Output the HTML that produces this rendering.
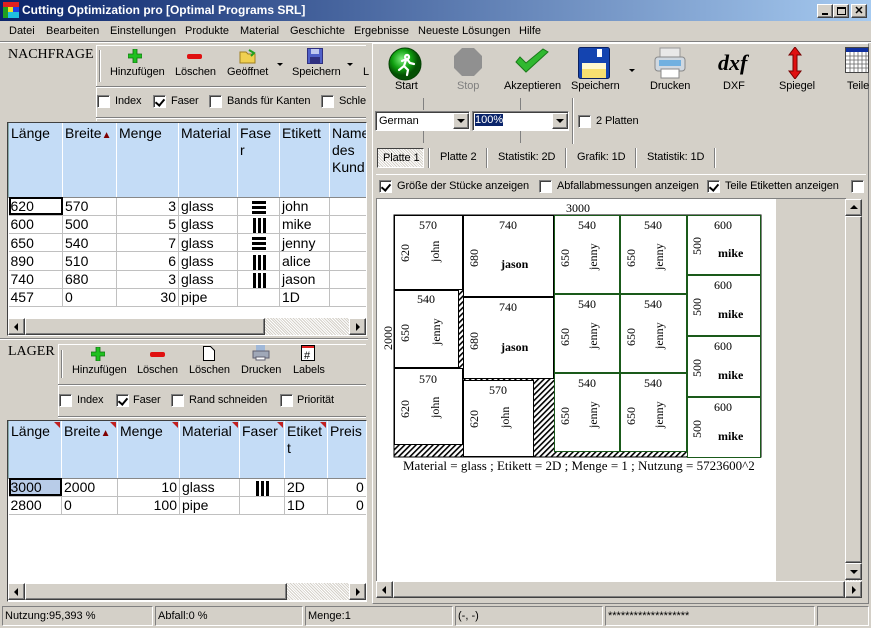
<!DOCTYPE html>
<html><head><meta charset="utf-8"><style>
*{box-sizing:border-box;margin:0;padding:0}
body{width:871px;height:628px;overflow:hidden;background:#d4d0c8;font-family:"Liberation Sans",Arial,sans-serif;font-size:12px;color:#000;position:relative}
.a{position:absolute}
.t{white-space:nowrap}
.cb{position:absolute;width:13px;height:13px;background:#fff;border:1px solid;border-color:#808080 #fff #fff #808080;box-shadow:inset 1px 1px 0 #404040}
.cb.k::after{content:"";position:absolute;left:3px;top:1px;width:4px;height:7px;border:solid #000;border-width:0 2px 2px 0;transform:rotate(40deg)}
table{border-collapse:collapse;table-layout:fixed;font-size:14px}
td{border-right:1px solid #c0c0c0;border-bottom:1px solid #c0c0c0;height:18px;padding:0 2px;white-space:nowrap;overflow:hidden;line-height:16px}
th{background:#c4dcf6;border-right:1px solid #fff;border-left:1px solid #8aa;border-bottom:1px solid #888;font-weight:normal;text-align:left;vertical-align:top;padding:2px 2px;line-height:17px;position:relative}
.r{text-align:right}
.tri::after{content:"";position:absolute;right:1px;top:1px;border-top:6px solid #c02020;border-left:6px solid transparent}
.sb{position:absolute;height:17px;background:#eee;background-image:repeating-linear-gradient(45deg,#fff 0 1px,#d4d0c8 1px 2px)}
.btn{position:absolute;background:#d4d0c8;border:1px solid;border-color:#fff #404040 #404040 #fff;box-shadow:inset -1px -1px 0 #808080}
.lbl{position:absolute;font-size:11px;white-space:nowrap;text-align:center;letter-spacing:-0.1px}
.sep{position:absolute;width:2px;border-left:1px solid #808080;border-right:1px solid #fff}
.st{position:absolute;top:606px;height:20px;border:1px solid;border-color:#808080 #fff #fff #808080;font-size:11px;padding:3px 2px;white-space:nowrap}
.bars{display:inline-block;width:16px;height:16px;vertical-align:middle}
.m{position:absolute;top:25px;font-size:11px;white-space:nowrap}
</style></head><body>
<div class="a" style="left:0;top:0;width:871px;height:21px;background:linear-gradient(90deg,#0a246a,#a6caf0)"></div>
<svg class="a" style="left:3px;top:2px" width="16" height="16"><rect x="0" y="0" width="16" height="5" fill="#e02020"/><rect x="0" y="5" width="5" height="11" fill="#20a020"/><rect x="5" y="5" width="5" height="5" fill="#f0e020"/><rect x="10" y="5" width="6" height="5" fill="#2040e0"/><rect x="5" y="10" width="11" height="6" fill="#20c0e0"/></svg>
<div class="a t" style="left:22px;top:3px;color:#fff;font-weight:bold;font-size:12px">Cutting Optimization pro [Optimal Programs SRL]</div>
<div class="btn" style="left:817px;top:4px;width:16px;height:14px"><div class="a" style="left:4px;top:8px;width:6px;height:2px;background:#000"></div></div>
<div class="btn" style="left:833px;top:4px;width:16px;height:14px"><div class="a" style="left:3px;top:2px;width:9px;height:8px;border:1px solid #000;border-top-width:2px"></div></div>
<div class="btn" style="left:851px;top:4px;width:16px;height:14px;font-size:11px;font-weight:bold;text-align:center;line-height:12px">✕</div>
<div class="m" style="left:9px">Datei</div><div class="m" style="left:46px">Bearbeiten</div><div class="m" style="left:110px">Einstellungen</div><div class="m" style="left:185px">Produkte</div><div class="m" style="left:240px">Material</div><div class="m" style="left:290px">Geschichte</div><div class="m" style="left:354px">Ergebnisse</div><div class="m" style="left:418px">Neueste Lösungen</div><div class="m" style="left:519px">Hilfe</div>
<div class="a" style="left:0;top:41px;width:871px;height:2px;border-top:1px solid #808080;border-bottom:1px solid #fff"></div>

<div class="a t" style="left:8px;top:47px;font-family:'Liberation Serif',serif;font-size:14px">NACHFRAGE</div>
<div class="a" style="left:96px;top:45px;width:270px;height:76px;background:#d4d0c8;border-left:1px solid #fff;border-top:1px solid #fff"></div>
<div class="sep" style="left:99px;top:50px;height:32px"></div>
<div class="a" style="left:96px;top:86px;width:270px;height:2px;border-top:1px solid #808080;border-bottom:1px solid #fff"></div>
<div class="a" style="left:96px;top:117px;width:270px;height:2px;border-top:1px solid #808080;border-bottom:1px solid #fff"></div>
<svg class="a" style="left:128px;top:49px" width="14" height="14"><path d="M5 0h4v5h5v4h-5v5h-4v-5h-5v-4h5z" fill="#20c020" stroke="#107010" stroke-width=".8"/></svg>
<div class="a" style="left:187px;top:54px;width:15px;height:5px;background:#e01010;border-radius:2px"></div>
<svg class="a" style="left:239px;top:48px" width="18" height="16"><path d="M1 4h6l2 2h7v9h-15z" fill="#f0d050" stroke="#a08020"/><path d="M10 2l5 3-3 3" fill="none" stroke="#20a020" stroke-width="2"/></svg>
<svg class="a" style="left:307px;top:48px" width="16" height="16"><rect x=".5" y=".5" width="15" height="15" fill="#5060c8" stroke="#303080"/><rect x="4" y="1" width="8" height="5" fill="#c0c8f0"/><rect x="3" y="9" width="10" height="6" fill="#303080"/></svg>
<div class="lbl" style="left:110px;top:66px">Hinzufügen</div>
<div class="lbl" style="left:175px;top:66px">Löschen</div>
<div class="lbl" style="left:227px;top:66px">Geöffnet</div>
<div class="a" style="left:277px;top:63px;border-top:3px solid #000;border-left:3px solid transparent;border-right:3px solid transparent"></div>
<div class="lbl" style="left:292px;top:66px">Speichern</div>
<div class="a" style="left:347px;top:63px;border-top:3px solid #000;border-left:3px solid transparent;border-right:3px solid transparent"></div>
<div class="lbl" style="left:363px;top:66px">L</div>
<div class="cb" style="left:97px;top:95px"></div><div class="lbl" style="left:115px;top:95px">Index</div>
<div class="cb k" style="left:153px;top:95px"></div><div class="lbl" style="left:171px;top:95px">Faser</div>
<div class="cb" style="left:209px;top:95px"></div><div class="lbl" style="left:227px;top:95px">Bands für Kanten</div>
<div class="cb" style="left:321px;top:95px"></div><div class="lbl" style="left:339px;top:95px">Schle</div>
<div class="a" style="left:7px;top:122px;width:360px;height:214px;background:#fff;border:1px solid;border-color:#404040 #fff #fff #404040;overflow:hidden">
<table style="width:400px">
<colgroup><col style="width:54px"><col style="width:54px"><col style="width:62px"><col style="width:59px"><col style="width:42px"><col style="width:50px"><col style="width:79px"></colgroup>
<tr style="height:74px"><th>Länge</th><th>Breite<span style="color:#800000;font-size:10px">▲</span></th><th>Menge</th><th>Material</th><th>Fase<br>r</th><th>Etikett</th><th>Name<br>des<br>Kund</th></tr>
<tr><td style="outline:2px solid #000;outline-offset:-2px">620</td><td>570</td><td class="r">3</td><td>glass</td><td style="text-align:center"><svg class="bars"><rect x="1" y="2" width="14" height="3"/><rect x="1" y="7" width="14" height="3"/><rect x="1" y="12" width="14" height="3"/></svg></td><td>john</td><td></td></tr>
<tr><td>600</td><td>500</td><td class="r">5</td><td>glass</td><td style="text-align:center"><svg class="bars"><rect x="2" y="1" width="3" height="15"/><rect x="7" y="1" width="3" height="15"/><rect x="12" y="1" width="3" height="15"/></svg></td><td>mike</td><td></td></tr>
<tr><td>650</td><td>540</td><td class="r">7</td><td>glass</td><td style="text-align:center"><svg class="bars"><rect x="1" y="2" width="14" height="3"/><rect x="1" y="7" width="14" height="3"/><rect x="1" y="12" width="14" height="3"/></svg></td><td>jenny</td><td></td></tr>
<tr><td>890</td><td>510</td><td class="r">6</td><td>glass</td><td style="text-align:center"><svg class="bars"><rect x="2" y="1" width="3" height="15"/><rect x="7" y="1" width="3" height="15"/><rect x="12" y="1" width="3" height="15"/></svg></td><td>alice</td><td></td></tr>
<tr><td>740</td><td>680</td><td class="r">3</td><td>glass</td><td style="text-align:center"><svg class="bars"><rect x="2" y="1" width="3" height="15"/><rect x="7" y="1" width="3" height="15"/><rect x="12" y="1" width="3" height="15"/></svg></td><td>jason</td><td></td></tr>
<tr><td>457</td><td>0</td><td class="r">30</td><td>pipe</td><td></td><td>1D</td><td></td></tr>
</table>
</div>
<div class="sb" style="left:8px;top:318px;width:358px"></div>
<div class="btn" style="left:8px;top:318px;width:17px;height:17px"><div class="a" style="left:5px;top:4px;border-right:4px solid #000;border-top:4px solid transparent;border-bottom:4px solid transparent"></div></div>
<div class="btn" style="left:25px;top:318px;width:240px;height:17px"></div>
<div class="btn" style="left:349px;top:318px;width:17px;height:17px"><div class="a" style="left:6px;top:4px;border-left:4px solid #000;border-top:4px solid transparent;border-bottom:4px solid transparent"></div></div>

<div class="a" style="left:0;top:338px;width:368px;height:2px;border-top:1px solid #808080;border-bottom:1px solid #fff"></div>
<div class="a t" style="left:8px;top:344px;font-family:'Liberation Serif',serif;font-size:14px">LAGER</div>
<div class="a" style="left:58px;top:344px;width:308px;height:74px;border-left:1px solid #fff;border-top:1px solid #fff"></div>
<div class="sep" style="left:61px;top:350px;height:28px"></div>
<div class="a" style="left:58px;top:384px;width:308px;height:2px;border-top:1px solid #808080;border-bottom:1px solid #fff"></div>
<div class="a" style="left:58px;top:416px;width:308px;height:2px;border-top:1px solid #808080;border-bottom:1px solid #fff"></div>
<svg class="a" style="left:91px;top:347px" width="14" height="14"><path d="M5 0h4v5h5v4h-5v5h-4v-5h-5v-4h5z" fill="#20c020" stroke="#107010" stroke-width=".8"/></svg>
<div class="a" style="left:150px;top:352px;width:15px;height:5px;background:#e01010;border-radius:2px"></div>
<svg class="a" style="left:203px;top:346px" width="12" height="15"><path d="M.5 .5h7l4 4v10h-11z" fill="#fff" stroke="#000"/></svg>
<svg class="a" style="left:252px;top:345px" width="18" height="16"><rect x="4" y="0" width="9" height="6" fill="#a0b8d8"/><rect x="1" y="6" width="16" height="7" fill="#a0a8b8" stroke="#606070"/><rect x="4" y="12" width="9" height="3" fill="#fff" stroke="#606070"/></svg>
<svg class="a" style="left:301px;top:345px" width="14" height="16"><rect x=".5" y=".5" width="13" height="15" fill="#fff" stroke="#000"/><rect x="1" y="1" width="12" height="2" fill="#e02020"/><text x="3" y="14" font-size="11" font-family="Liberation Sans">#</text></svg>
<div class="lbl" style="left:72px;top:364px">Hinzufügen</div>
<div class="lbl" style="left:137px;top:364px">Löschen</div>
<div class="lbl" style="left:189px;top:364px">Löschen</div>
<div class="lbl" style="left:241px;top:364px">Drucken</div>
<div class="lbl" style="left:293px;top:364px">Labels</div>
<div class="cb" style="left:59px;top:394px"></div><div class="lbl" style="left:77px;top:394px">Index</div>
<div class="cb k" style="left:116px;top:394px"></div><div class="lbl" style="left:133px;top:394px">Faser</div>
<div class="cb" style="left:171px;top:394px"></div><div class="lbl" style="left:189px;top:394px">Rand schneiden</div>
<div class="cb" style="left:280px;top:394px"></div><div class="lbl" style="left:297px;top:394px">Priorität</div>
<div class="a" style="left:7px;top:420px;width:360px;height:182px;background:#fff;border:1px solid;border-color:#404040 #fff #fff #404040;overflow:hidden">
<table style="width:400px">
<colgroup><col style="width:53px"><col style="width:56px"><col style="width:62px"><col style="width:60px"><col style="width:45px"><col style="width:43px"><col style="width:81px"></colgroup>
<tr style="height:57px"><th class="tri">Länge</th><th class="tri">Breite<span style="color:#800000;font-size:10px">▲</span></th><th class="tri">Menge</th><th class="tri">Material</th><th class="tri">Faser</th><th class="tri">Etiket<br>t</th><th>Preis</th></tr>
<tr><td style="background:#b8cce8;outline:2px solid #000;outline-offset:-2px">3000</td><td>2000</td><td class="r">10</td><td>glass</td><td style="text-align:center"><svg class="bars"><rect x="2" y="1" width="3" height="15"/><rect x="7" y="1" width="3" height="15"/><rect x="12" y="1" width="3" height="15"/></svg></td><td>2D</td><td style="padding-left:28px">0</td></tr>
<tr><td>2800</td><td>0</td><td class="r">100</td><td>pipe</td><td></td><td>1D</td><td style="padding-left:28px">0</td></tr>
</table>
</div>
<div class="sb" style="left:8px;top:583px;width:358px"></div>
<div class="btn" style="left:8px;top:583px;width:17px;height:17px"><div class="a" style="left:5px;top:4px;border-right:4px solid #000;border-top:4px solid transparent;border-bottom:4px solid transparent"></div></div>
<div class="btn" style="left:25px;top:583px;width:262px;height:17px"></div>
<div class="btn" style="left:349px;top:583px;width:17px;height:17px"><div class="a" style="left:6px;top:4px;border-left:4px solid #000;border-top:4px solid transparent;border-bottom:4px solid transparent"></div></div>

<div class="a" style="left:372px;top:43px;width:497px;height:561px;border:1px solid;border-color:#fff #808080 #808080 #fff"></div>
<svg class="a" style="left:388px;top:47px" width="34" height="34"><defs><radialGradient id="g" cx=".4" cy=".35"><stop offset="0" stop-color="#80f080"/><stop offset=".6" stop-color="#10a010"/><stop offset="1" stop-color="#045004"/></radialGradient></defs><circle cx="17" cy="17" r="16" fill="url(#g)" stroke="#034003"/><path d="M19 8a2 2 0 1 0 .1 0M14 14l5-2 3 4 4 1M18 13l-2 6 4 4-1 5M16 19l-5 4" stroke="#fff" stroke-width="2.2" fill="none" stroke-linecap="round"/></svg>
<svg class="a" style="left:454px;top:48px" width="28" height="28"><path d="M8 0h12l8 8v12l-8 8h-12l-8-8v-12z" fill="#909090"/></svg>
<svg class="a" style="left:514px;top:48px" width="36" height="28"><path d="M2 14l10 10 22-20-5-3-17 14-6-6z" fill="#30b830" stroke="#1a7a1a"/></svg>
<svg class="a" style="left:578px;top:47px" width="32" height="32"><rect x=".5" y=".5" width="31" height="31" rx="2" fill="#1444b0" stroke="#0a2060"/><rect x="19" y="2" width="5" height="8" fill="#fff"/><rect x="4" y="16" width="24" height="15" fill="#f8e070"/><rect x="4" y="16" width="24" height="6" fill="#fff8d0"/></svg>
<div class="a" style="left:629px;top:69px;border-top:3px solid #000;border-left:3px solid transparent;border-right:3px solid transparent"></div>
<svg class="a" style="left:654px;top:47px" width="32" height="32"><rect x="6" y="1" width="20" height="10" fill="#e8e8e8" stroke="#999"/><rect x="1" y="10" width="30" height="14" rx="3" fill="#d0d8e0" stroke="#888"/><rect x="5" y="13" width="22" height="6" fill="#70b0e0"/><rect x="7" y="22" width="18" height="9" fill="#fff" stroke="#888"/></svg>
<div class="a t" style="left:718px;top:50px;font-size:22px;font-weight:bold;font-style:italic;font-family:'Liberation Serif',serif">dxf</div>
<svg class="a" style="left:787px;top:47px" width="16" height="32"><path d="M8 0l6 8h-4v16h4l-6 8-6-8h4v-16h-4z" fill="#e01010" stroke="#700"/></svg>
<svg class="a" style="left:845px;top:47px" width="24" height="26"><rect x=".5" y=".5" width="23" height="25" fill="#fff" stroke="#444"/><rect x="1" y="1" width="22" height="4" fill="#1030a0"/><path d="M1 9h22M1 13h22M1 17h22M1 21h22M5 5v20M9 5v20M13 5v20M17 5v20M21 5v20" stroke="#666" stroke-width=".8"/></svg>
<div class="lbl" style="left:395px;top:80px">Start</div>
<div class="lbl" style="left:457px;top:80px;color:#808080">Stop</div>
<div class="lbl" style="left:504px;top:80px">Akzeptieren</div>
<div class="lbl" style="left:571px;top:80px">Speichern</div>
<div class="lbl" style="left:650px;top:80px">Drucken</div>
<div class="lbl" style="left:723px;top:80px">DXF</div>
<div class="lbl" style="left:779px;top:80px">Spiegel</div>
<div class="lbl" style="left:847px;top:80px">Teile</div>
<div class="a" style="left:423px;top:98px;width:1px;height:12px;background:#808080"></div>
<div class="a" style="left:520px;top:98px;width:1px;height:12px;background:#808080"></div>
<div class="a" style="left:423px;top:131px;width:1px;height:12px;background:#808080"></div>
<div class="a" style="left:520px;top:131px;width:1px;height:12px;background:#808080"></div>
<div class="sep" style="left:572px;top:98px;height:46px"></div>
<div class="a" style="left:375px;top:111px;width:95px;height:20px;background:#fff;border:1px solid;border-color:#808080 #fff #fff #808080;box-shadow:inset 1px 1px 0 #404040;font-size:11px;padding:3px 3px">German</div>
<div class="btn" style="left:453px;top:113px;width:16px;height:16px"><div class="a" style="left:3px;top:5px;border-top:4px solid #000;border-left:4px solid transparent;border-right:4px solid transparent"></div></div>
<div class="a" style="left:472px;top:111px;width:97px;height:20px;background:#fff;border:1px solid;border-color:#808080 #fff #fff #808080;box-shadow:inset 1px 1px 0 #404040;font-size:11px;padding:2px 2px"><span style="background:#0a246a;color:#fff">100%</span></div>
<div class="btn" style="left:552px;top:113px;width:16px;height:16px"><div class="a" style="left:3px;top:5px;border-top:4px solid #000;border-left:4px solid transparent;border-right:4px solid transparent"></div></div>
<div class="cb" style="left:578px;top:115px"></div><div class="lbl" style="left:596px;top:115px">2 Platten</div>
<div class="a" style="left:377px;top:148px;width:47px;height:20px;border:1px solid;border-color:#404040 #fff #fff #404040;background:repeating-linear-gradient(45deg,#fff 0 1px,#d4d0c8 1px 2px)"></div>
<div class="lbl" style="left:383px;top:152px">Platte 1</div>
<div class="sep" style="left:428px;top:148px;height:20px"></div>
<div class="lbl" style="left:440px;top:151px">Platte 2</div>
<div class="sep" style="left:486px;top:148px;height:20px"></div>
<div class="lbl" style="left:498px;top:151px">Statistik: 2D</div>
<div class="sep" style="left:565px;top:148px;height:20px"></div>
<div class="lbl" style="left:577px;top:151px">Grafik: 1D</div>
<div class="sep" style="left:635px;top:148px;height:20px"></div>
<div class="lbl" style="left:647px;top:151px">Statistik: 1D</div>
<div class="sep" style="left:714px;top:148px;height:20px"></div>
<div class="a" style="left:376px;top:174px;width:490px;height:24px;border-top:1px solid #fff"></div>
<div class="cb k" style="left:379px;top:180px"></div><div class="lbl" style="left:397px;top:180px">Größe der Stücke anzeigen</div>
<div class="cb" style="left:539px;top:180px"></div><div class="lbl" style="left:557px;top:180px">Abfallabmessungen anzeigen</div>
<div class="cb k" style="left:707px;top:180px"></div><div class="lbl" style="left:725px;top:180px">Teile Etiketten anzeigen</div>
<div class="cb" style="left:851px;top:180px"></div>
<div class="a" style="left:376px;top:198px;width:470px;height:383px;background:#d4d0c8;border-top:1px solid #808080;border-left:1px solid #808080"></div>
<svg class="a" style="left:377px;top:199px" width="399" height="382" font-family="Liberation Serif,serif" font-size="12">
<defs><pattern id="h" width="4" height="4" patternUnits="userSpaceOnUse" patternTransform="rotate(45)"><rect width="4" height="4" fill="#fff"/><rect width="1.6" height="4" fill="#000"/></pattern></defs>
<rect width="399" height="382" fill="#fff"/>
<g transform="translate(-377,-199)">
<text x="566" y="212">3000</text>
<text transform="translate(392,350) rotate(-90)">2000</text>
<rect x="394" y="215" width="367" height="242" fill="url(#h)" stroke="#000"/>
<g fill="#fff" stroke="#000" stroke-width="1">
<rect x="394.5" y="215.5" width="68" height="74"/><rect x="394.5" y="290.5" width="64" height="77"/><rect x="394.5" y="368.5" width="68" height="76"/>
<rect x="463.5" y="215.5" width="90" height="81"/><rect x="463.5" y="297.5" width="90" height="81"/><rect x="463.5" y="380.5" width="70" height="76"/>
</g>
<g fill="#fff" stroke="#1a5a1a" stroke-width="1">
<rect x="554.5" y="215.5" width="65" height="78"/><rect x="554.5" y="294.5" width="65" height="78"/><rect x="554.5" y="373.5" width="65" height="78"/>
<rect x="620.5" y="215.5" width="66" height="78"/><rect x="620.5" y="294.5" width="66" height="78"/><rect x="620.5" y="373.5" width="66" height="78"/>
<rect x="687.5" y="215.5" width="73" height="59"/><rect x="687.5" y="275.5" width="73" height="60"/><rect x="687.5" y="336.5" width="73" height="60"/><rect x="687.5" y="397.5" width="73" height="60"/>
</g>
<g>
<text x="419" y="229">570</text><text transform="translate(409,262) rotate(-90)">620</text><text transform="translate(439,262) rotate(-90)">john</text>
<text x="417" y="303">540</text><text transform="translate(409,342) rotate(-90)">650</text><text transform="translate(440,345) rotate(-90)">jenny</text>
<text x="419" y="383">570</text><text transform="translate(409,418) rotate(-90)">620</text><text transform="translate(439,418) rotate(-90)">john</text>
<text x="499" y="229">740</text><text transform="translate(478,267) rotate(-90)">680</text><text x="501" y="268" font-weight="bold">jason</text>
<text x="499" y="311">740</text><text transform="translate(478,350) rotate(-90)">680</text><text x="501" y="351" font-weight="bold">jason</text>
<text x="489" y="394">570</text><text transform="translate(478,428) rotate(-90)">620</text><text transform="translate(509,428) rotate(-90)">john</text>
<text x="578" y="229">540</text><text transform="translate(569,267) rotate(-90)">650</text><text transform="translate(597,270) rotate(-90)">jenny</text>
<text x="578" y="308">540</text><text transform="translate(569,346) rotate(-90)">650</text><text transform="translate(597,349) rotate(-90)">jenny</text>
<text x="578" y="387">540</text><text transform="translate(569,425) rotate(-90)">650</text><text transform="translate(597,428) rotate(-90)">jenny</text>
<text x="644" y="229">540</text><text transform="translate(635,267) rotate(-90)">650</text><text transform="translate(663,270) rotate(-90)">jenny</text>
<text x="644" y="308">540</text><text transform="translate(635,346) rotate(-90)">650</text><text transform="translate(663,349) rotate(-90)">jenny</text>
<text x="644" y="387">540</text><text transform="translate(635,425) rotate(-90)">650</text><text transform="translate(663,428) rotate(-90)">jenny</text>
<text x="714" y="229">600</text><text transform="translate(701,255) rotate(-90)">500</text><text x="718" y="257" font-weight="bold">mike</text>
<text x="714" y="289">600</text><text transform="translate(701,316) rotate(-90)">500</text><text x="718" y="318" font-weight="bold">mike</text>
<text x="714" y="350">600</text><text transform="translate(701,377) rotate(-90)">500</text><text x="718" y="379" font-weight="bold">mike</text>
<text x="714" y="411">600</text><text transform="translate(701,438) rotate(-90)">500</text><text x="718" y="440" font-weight="bold">mike</text>
</g>
<text x="403" y="470" font-size="13">Material = glass ; Etikett = 2D ; Menge = 1 ; Nutzung = 5723600^2</text>
</g></svg>
<div class="a" style="left:845px;top:199px;width:17px;height:382px;background:repeating-linear-gradient(45deg,#fff 0 1px,#d4d0c8 1px 2px)"></div>
<div class="btn" style="left:845px;top:199px;width:17px;height:17px"><div class="a" style="left:4px;top:5px;border-bottom:4px solid #000;border-left:4px solid transparent;border-right:4px solid transparent"></div></div>
<div class="btn" style="left:845px;top:216px;width:17px;height:347px"></div>
<div class="btn" style="left:845px;top:563px;width:17px;height:17px"><div class="a" style="left:4px;top:6px;border-top:4px solid #000;border-left:4px solid transparent;border-right:4px solid transparent"></div></div>
<div class="a" style="left:376px;top:581px;width:486px;height:17px;background:repeating-linear-gradient(45deg,#fff 0 1px,#d4d0c8 1px 2px)"></div>
<div class="btn" style="left:376px;top:581px;width:17px;height:17px"><div class="a" style="left:5px;top:4px;border-right:4px solid #000;border-top:4px solid transparent;border-bottom:4px solid transparent"></div></div>
<div class="btn" style="left:393px;top:581px;width:452px;height:17px"></div>
<div class="btn" style="left:845px;top:581px;width:17px;height:17px"><div class="a" style="left:6px;top:4px;border-left:4px solid #000;border-top:4px solid transparent;border-bottom:4px solid transparent"></div></div>

<div class="st" style="left:2px;width:151px">Nutzung:95,393 %</div>
<div class="st" style="left:155px;width:148px">Abfall:0 %</div>
<div class="st" style="left:305px;width:148px">Menge:1</div>
<div class="st" style="left:455px;width:148px">(-, -)</div>
<div class="st" style="left:605px;width:210px">*******************</div>
<div class="st" style="left:817px;width:52px"></div>
</body></html>
